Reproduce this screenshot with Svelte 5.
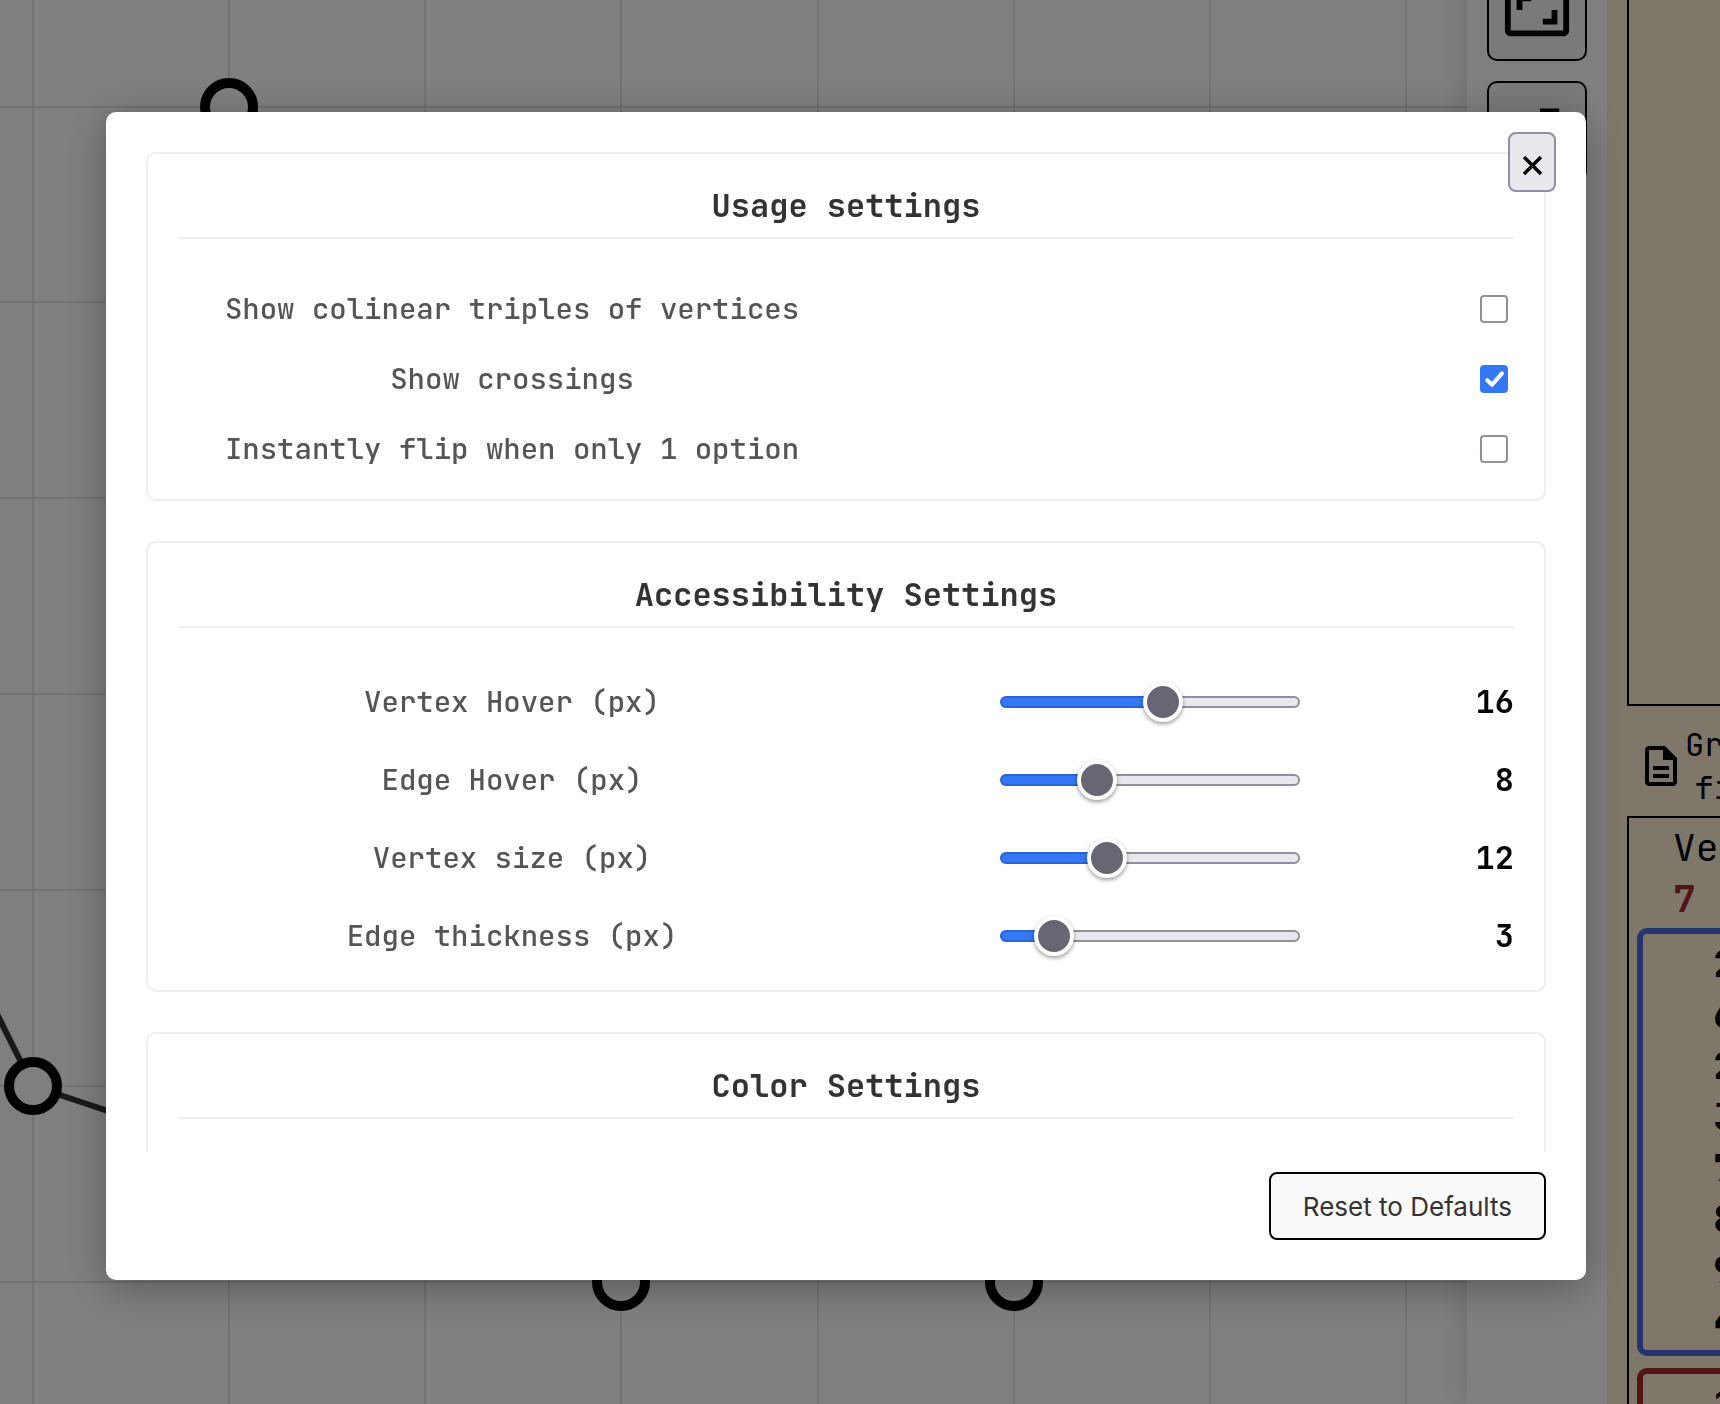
<script>
  let toggles = $state([
    { id: 'colinear', label: 'Show colinear triples of vertices', on: false },
    { id: 'crossings', label: 'Show crossings', on: true },
    { id: 'flip', label: 'Instantly flip when only 1 option', on: false }
  ]);

  let sliders = $state([
    { id: 'vertex-hover', label: 'Vertex Hover (px)', value: 16, min: 5, max: 25 },
    { id: 'edge-hover', label: 'Edge Hover (px)', value: 8, min: 1, max: 25 },
    { id: 'vertex-size', label: 'Vertex size (px)', value: 12, min: 4, max: 28 },
    { id: 'edge-thickness', label: 'Edge thickness (px)', value: 3, min: 1, max: 17 }
  ]);

  const fill = (s) => ((s.value - s.min) / (s.max - s.min)) * 100;

  const columns = [33, 229, 425, 621, 818, 1014, 1210, 1406, 1602];
  const rows = [107, 302, 498, 694, 890, 1086, 1282, 1478];
  const vertices = [
    { x: 229, y: 107 },
    { x: 33, y: 1086 },
    { x: 621, y: 1282 },
    { x: 1014, y: 1282 }
  ];
  const group = [2, 6, 2, 3, 7, 8, 9, 4];
</script>

<div class="page">
  <svg class="canvas" aria-hidden="true">
    {#each columns as x}
      <line class="grid-line" x1={x} y1="0" x2={x} y2="100%" />
    {/each}
    {#each rows as y}
      <line class="grid-line" x1="0" y1={y} x2="100%" y2={y} />
    {/each}
    <line class="edge" x1="33" y1="1086" x2="-163" y2="694" />
    <line class="edge" x1="33" y1="1086" x2="621" y2="1282" />
    {#each vertices as v}
      <circle class="vertex" cx={v.x} cy={v.y} r="24" />
    {/each}
  </svg>

  <nav class="toolbar">
    <button class="tool" aria-label="Fit view">
      <svg viewBox="0 0 24 24"><path d="M19 12h-2v3h-3v2h5v-5zM7 9h3V7H5v5h2V9zm14-6H3c-1.1 0-2 .9-2 2v14c0 1.1.9 2 2 2h18c1.1 0 2-.9 2-2V5c0-1.1-.9-2-2-2zm0 16H3V5h18v14z" /></svg>
    </button>
    <button class="tool" aria-label="Expand">
      <svg viewBox="0 0 24 24"><path d="M13 4.6h6.6V11h-2V8L7.8 17.6H11v2H4.4V13h2v3.2L16.2 6.6H13z" /></svg>
    </button>
  </nav>

  <aside class="sidebar">
    <div class="sidebar-inner">
      <div class="panel preview"></div>
      <div class="file">
        <svg viewBox="0 0 24 24"><path d="M8 16h8v2H8zm0-4h8v2H8zm6-10H6c-1.1 0-2 .9-2 2v16c0 1.1.89 2 1.99 2H18c1.1 0 2-.9 2-2V8l-6-6zm4 18H6V4h7v5h5v11z" /></svg>
        <span>Graph<br />file</span>
      </div>
      <div class="panel info">
        <p class="count">Vertices<br /><b>7</b></p>
        <div class="group blue">
          {#each group as n}<div>{n}</div>{/each}
        </div>
        <div class="group red"><div>1</div></div>
      </div>
    </div>
  </aside>
</div>

<div class="overlay">
  <div class="modal" role="dialog" aria-modal="true" aria-label="Settings">
    <div class="body">
      <section>
        <h2>Usage settings</h2>
        <div class="rows">
          {#each toggles as t}
            <div class="row toggle">
              <label for={t.id}>{t.label}</label>
              <span class="check">
                <input id={t.id} type="checkbox" bind:checked={t.on} />
                {#if t.on}
                  <svg viewBox="0 0 28 28" aria-hidden="true"><path d="M7.3 15.2 12 19.8 22 8.4" /></svg>
                {/if}
              </span>
            </div>
          {/each}
        </div>
      </section>

      <section>
        <h2>Accessibility Settings</h2>
        <div class="rows">
          {#each sliders as s}
            <div class="row range">
              <label for={s.id}>{s.label}</label>
              <input id={s.id} type="range" min={s.min} max={s.max} bind:value={s.value} style="--fill: {fill(s)}%" />
              <output for={s.id}>{s.value}</output>
            </div>
          {/each}
        </div>
      </section>

      <section>
        <h2>Color Settings</h2>
        <div class="rows colors"></div>
      </section>
    </div>

    <footer>
      <button class="reset">Reset to Defaults</button>
    </footer>

    <button class="close" aria-label="Close">
      <svg viewBox="0 0 22 22" aria-hidden="true"><path d="M3 3 20 20M20 3 3 20" /></svg>
    </button>
  </div>
</div>

<style>
  :global(body) {
    overflow: hidden;
    background: #fff;
  }

  .page,
  .overlay {
    box-sizing: border-box;
    font-family: 'JetBrains Mono', 'DejaVu Sans Mono', monospace;
  }

  .page {
    position: relative;
    display: flex;
    justify-content: flex-end;
    height: 100vh;
    overflow: hidden;
  }

  .canvas {
    position: absolute;
    inset: 0;
    width: 100%;
    height: 100%;
  }

  .grid-line {
    stroke: #e4e4e4;
    stroke-width: 2;
  }

  .edge {
    stroke: #333;
    stroke-width: 6;
  }

  .vertex {
    fill: #fff;
    stroke: #000;
    stroke-width: 10;
  }

  .toolbar {
    position: relative;
    display: flex;
    flex-direction: column;
    justify-content: flex-start;
    align-items: center;
    gap: 20px;
    flex: 0 0 140px;
    margin-top: -39px;
    background: rgba(255, 255, 255, 0.95);
    box-shadow: 0 0 30px rgba(0, 0, 0, 0.15);
  }

  .tool {
    display: flex;
    align-items: center;
    justify-content: center;
    flex: none;
    width: 100px;
    height: 100px;
    padding: 0 0 2px;
    border: 2px solid #000;
    border-radius: 10px;
    background: #f5f5f5;
  }

  .tool svg {
    width: 70px;
    height: 70px;
    flex: none;
  }

  .sidebar {
    position: relative;
    flex: 0 0 113px;
    overflow: hidden;
    background: #ffefd5;
  }

  .sidebar-inner {
    display: flex;
    flex-direction: column;
    width: 420px;
    height: 100%;
    padding-left: 20px;
  }

  .panel {
    border: 2px solid #000;
  }

  .preview {
    height: 704px;
    flex: none;
    border-top: 0;
  }

  .file {
    display: flex;
    align-items: center;
    flex: none;
    height: 110px;
    padding: 10px 10px 0;
    box-sizing: border-box;
    font-size: 32px;
    line-height: 43px;
  }

  .file svg {
    width: 48px;
    height: 48px;
    flex: none;
  }

  .file span {
    text-align: center;
  }

  .info {
    display: flex;
    flex-direction: column;
    gap: 12px;
    flex: none;
    padding: 4px 8px;
    font-size: 38px;
    line-height: 51px;
  }

  .count {
    margin: 0 0 -8px;
    padding-left: 36px;
  }

  .count b {
    color: #a52a2a;
  }

  .group {
    padding: 4px 0 4px 70px;
    border: 6px solid;
    border-radius: 10px;
    font-weight: 700;
  }

  .group div {
    color: #000;
  }

  .blue {
    border-color: #4c68de;
  }

  .red {
    border-color: #a52a2a;
  }

  .overlay {
    position: fixed;
    inset: 0;
    padding: 112px 134px 124px 106px;
    background: rgba(0, 0, 0, 0.5);
  }

  .modal {
    position: relative;
    display: flex;
    flex-direction: column;
    gap: 20px;
    box-sizing: border-box;
    height: 100%;
    padding: 40px;
    border-radius: 10px;
    background: #fff;
    box-shadow: 0 8px 40px rgba(0, 0, 0, 0.3);
  }

  .body {
    display: flex;
    flex-direction: column;
    gap: 40px;
    flex: 1;
    min-height: 0;
    overflow-y: auto;
    scrollbar-width: none;
  }

  section {
    flex: none;
    padding: 30px;
    border: 2px solid #eee;
    border-radius: 10px;
  }

  h2 {
    margin: 0 0 50px;
    padding-bottom: 10px;
    border-bottom: 2px solid #eee;
    color: #333;
    font-size: 32px;
    font-weight: 700;
    line-height: 43px;
    text-align: center;
  }

  .rows {
    display: flex;
    flex-direction: column;
    gap: 30px;
  }

  .colors {
    min-height: 120px;
  }

  .row {
    display: grid;
    align-items: center;
  }

  .toggle {
    grid-template-columns: 1fr 1fr;
    height: 40px;
  }

  .range {
    grid-template-columns: 50% 1fr 60px;
    height: 48px;
  }

  label {
    color: #555;
    font-size: 29px;
    font-weight: 500;
    line-height: 40px;
    text-align: center;
  }

  .check {
    display: grid;
    justify-self: end;
    margin-right: 6px;
  }

  .check > * {
    grid-area: 1 / 1;
  }

  .check svg {
    width: 28px;
    height: 28px;
    fill: none;
    stroke: #fff;
    stroke-width: 4;
    stroke-linecap: round;
    stroke-linejoin: round;
    pointer-events: none;
  }

  input[type='checkbox'] {
    appearance: none;
    box-sizing: border-box;
    width: 28px;
    height: 28px;
    margin: 0;
    border: 2px solid #8f8f9d;
    border-radius: 4px;
    background: #fff;
  }

  input[type='checkbox']:checked {
    border-color: #3478f6;
    background: #3478f6;
  }

  input[type='range'] {
    appearance: none;
    justify-self: center;
    width: 300px;
    height: 40px;
    margin: 0;
    background: transparent;
  }

  input[type='range']::-webkit-slider-runnable-track {
    box-sizing: border-box;
    height: 12px;
    border: 2px solid transparent;
    border-radius: 6px;
    background:
      linear-gradient(to right, #3478f6 var(--fill), #e9e9ed var(--fill)) padding-box,
      linear-gradient(to right, #2a63d6 var(--fill), #8f8f9d var(--fill)) border-box;
  }

  input[type='range']::-webkit-slider-thumb {
    appearance: none;
    box-sizing: border-box;
    width: 40px;
    height: 40px;
    margin-top: -16px;
    border: 4px solid #fff;
    border-radius: 50%;
    background: #676774;
    box-shadow: 0 2px 4px rgba(0, 0, 0, 0.4);
  }

  output {
    color: #000;
    font-size: 32px;
    font-weight: 700;
    line-height: 48px;
    text-align: right;
  }

  footer {
    display: flex;
    justify-content: flex-end;
  }

  .reset {
    padding: 17px 32px 15px;
    border: 2px solid #000;
    border-radius: 8px;
    background: #f9f9f9;
    color: #333;
    font-family: Inter, sans-serif;
    font-size: 26px;
    line-height: 32px;
  }

  .close {
    position: absolute;
    top: 20px;
    right: 30px;
    display: flex;
    align-items: center;
    justify-content: center;
    width: 48px;
    height: 60px;
    padding: 6px 0 0;
    border: 2px solid #8f8f9d;
    border-radius: 8px;
    background: #e9e9ed;
  }

  .close svg {
    width: 22px;
    height: 22px;
    fill: none;
    stroke: #000;
    stroke-width: 3.4;
  }
</style>
